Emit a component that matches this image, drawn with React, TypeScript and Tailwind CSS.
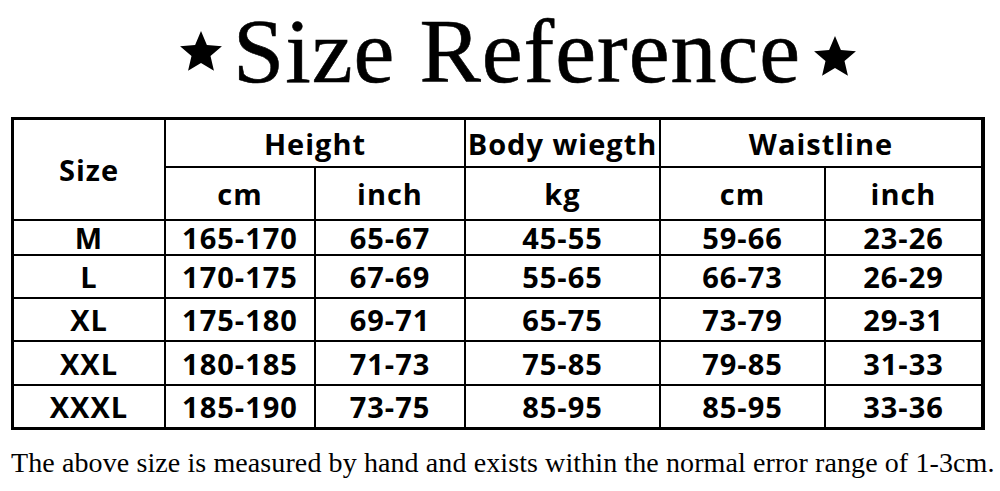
import React from "react";

const Star = ({ className }: { className?: string }) => (
  <svg width="42" height="42" viewBox="0 0 42 42" className={className}>
    <polygon
      fill="#000"
      points="21,1 26.88,14.91 41.92,16.2 30.51,26.09 33.93,40.8 21,33 8.07,40.8 11.49,26.09 0.08,16.2 15.12,14.91"
    />
  </svg>
);

const rows: string[][] = [
  ["M", "165-170", "65-67", "45-55", "59-66", "23-26"],
  ["L", "170-175", "67-69", "55-65", "66-73", "26-29"],
  ["XL", "175-180", "69-71", "65-75", "73-79", "29-31"],
  ["XXL", "180-185", "71-73", "75-85", "79-85", "31-33"],
  ["XXXL", "185-190", "73-75", "85-95", "85-95", "33-36"],
];

const cell = "bg-white flex items-center justify-center text-black";

export default function App() {
  return (
    <div className="w-[1000px] h-[491px] bg-white overflow-hidden">
      <div className="h-[97px] flex items-start pl-[180px]">
        <Star className="mt-[30px]" />
        <div
          className="mt-[5px] ml-[11px] text-[92px] leading-none tracking-[1px] text-black whitespace-nowrap [-webkit-text-stroke:0.6px_black]"
          style={{ fontFamily: '"Liberation Serif", serif' }}
        >
          Size Reference
        </div>
        <Star className="mt-[35px] ml-[13px]" />
      </div>
      <div
        className="ml-[11px] mt-[20px] w-[974px] grid gap-[2px] bg-black p-[3px] font-bold text-[29px] leading-none tracking-[1px]"
        style={{
          fontFamily: '"Open Sans", sans-serif',
          gridTemplateColumns: "150px 148px 148px 193px 163px 155px",
          gridTemplateRows: "46px 51px 33px 41px 41px 42px 41px",
        }}
      >
        <div className={`${cell} row-span-2`}>Size</div>
        <div className={`${cell} col-span-2`}>Height</div>
        <div className={cell}>Body wiegth</div>
        <div className={`${cell} col-span-2`}>Waistline</div>
        <div className={cell}>cm</div>
        <div className={cell}>inch</div>
        <div className={cell}>kg</div>
        <div className={cell}>cm</div>
        <div className={cell}>inch</div>
        {rows.map((r, i) =>
          r.map((v, j) => (
            <div key={`${i}-${j}`} className={cell}>
              {v}
            </div>
          ))
        )}
      </div>
      <div
        className="mt-[19px] pl-[11px] text-[28px] leading-none tracking-[0.1px] text-black whitespace-nowrap"
        style={{ fontFamily: '"Liberation Serif", serif' }}
      >
        The above size is measured by hand and exists within the normal error range of 1-3cm.
      </div>
    </div>
  );
}
